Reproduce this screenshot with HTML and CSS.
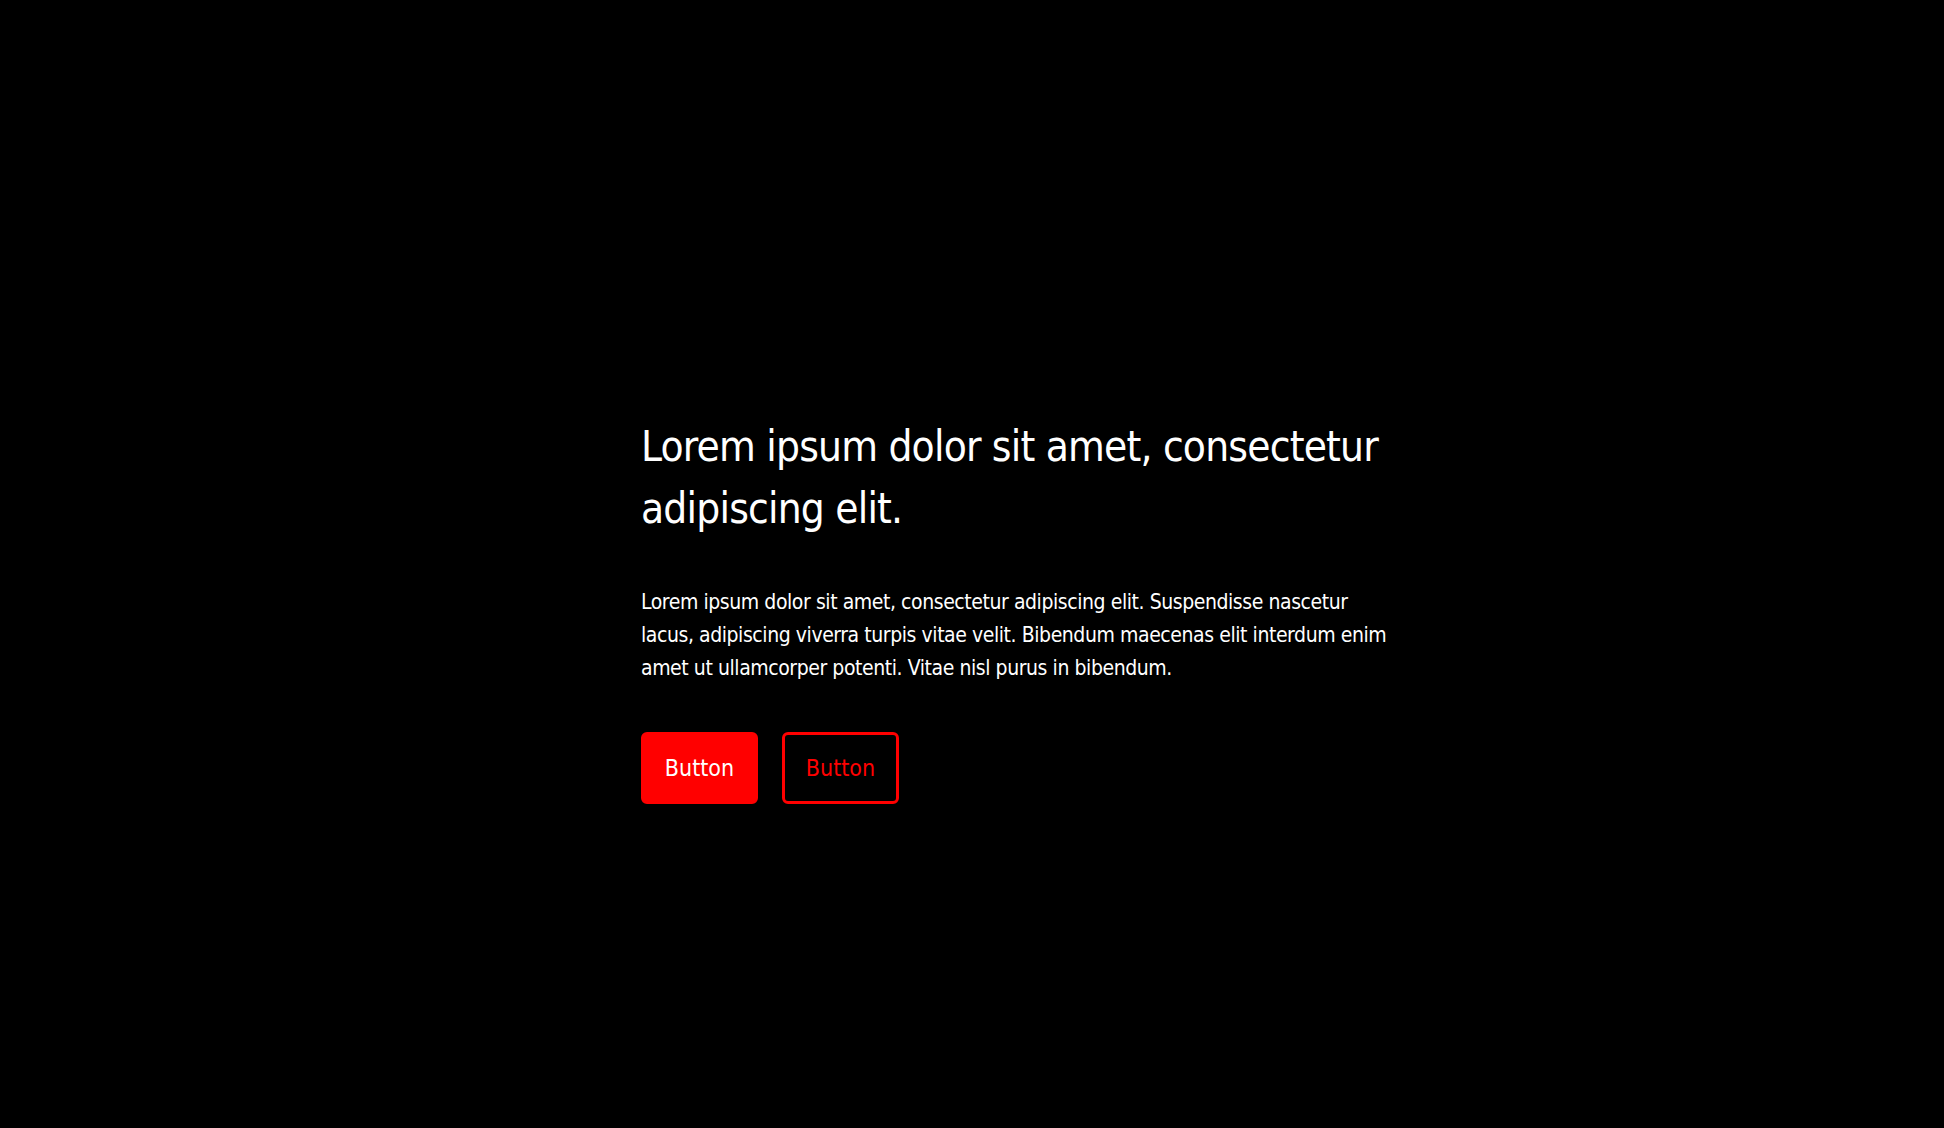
FILE: index.html
```html
<!DOCTYPE html>
<html>
<head>
<meta charset="utf-8">
<link rel="stylesheet" href="styles.css">
</head>
<body>
<main class="page">
  <section class="hero">
    <h1 class="title">Lorem ipsum dolor sit amet, consectetur adipiscing elit.</h1>
    <p class="lead">Lorem ipsum dolor sit amet, consectetur adipiscing elit. Suspendisse nascetur lacus, adipiscing viverra turpis vitae velit. Bibendum maecenas elit interdum enim amet ut ullamcorper potenti. Vitae nisl purus in bibendum.</p>
    <div class="actions">
      <button class="btn btn-solid">Button</button>
      <button class="btn btn-outline">Button</button>
    </div>
  </section>
</main>
</body>
</html>
```
FILE: styles.css
```css
html, body {
  margin: 0;
  padding: 0;
  background: #000;
  height: 100%;
}
.page {
  min-height: 1128px;
  box-sizing: border-box;
  padding: 416px 0 0 641px;
  font-family: "DejaVu Sans Condensed", "Liberation Sans Narrow", "Liberation Sans", sans-serif;
  color: #fff;
}
.hero {
  width: 760px;
  display: flex;
  flex-direction: column;
}
.title {
  margin: 0;
  font-size: 42px;
  font-weight: 400;
  line-height: 62px;
  letter-spacing: -0.8px;
}
.lead {
  margin: 46px 0 0;
  font-size: 21px;
  line-height: 33px;
  letter-spacing: -0.43px;
}
.actions {
  display: flex;
  gap: 24px;
  margin-top: 47px;
}
.btn {
  font-family: inherit;
  font-size: 23px;
  width: 117px;
  height: 72px;
  border-radius: 6px;
  cursor: pointer;
  box-sizing: border-box;
}
.btn-solid {
  background: #ff0000;
  color: #fff;
  border: 3px solid #ff0000;
}
.btn-outline {
  background: #000;
  color: #ff0000;
  border: 3px solid #ff0000;
}
```
